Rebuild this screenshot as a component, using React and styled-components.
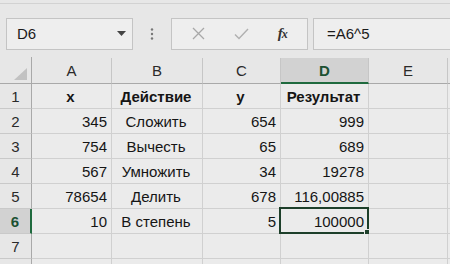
import React from "react";
import styled, { createGlobalStyle } from "styled-components";

const GlobalStyle = createGlobalStyle`
    html, body {
        margin: 0;
        padding: 0;
        background: #e7e7e7;
        font-family: "Liberation Sans", Arial, sans-serif;
        overflow: hidden;
    }
`;

const Page = styled.div`
    width: 450px;
    height: 264px;
    background: #e7e7e7;
    overflow: hidden;
`;

const Toolbar = styled.div`
    height: 54px;
    box-sizing: border-box;
    border-top: 1px solid #d2d2d2;
    margin-top: 3px;
    display: flex;
    align-items: center;
    padding: 0 0 0 6px;
`;

const Box = styled.div`
    height: 32px;
    box-sizing: border-box;
    border: 1px solid #c4c4c4;
    background: #eeeeee;
    display: flex;
    align-items: center;
    margin-top: 6px;
`;

const NameBox = styled(Box)`
    width: 127px;
    padding: 0 6px 0 10px;
    justify-content: space-between;
    font-size: 15px;
    color: #1a1a1a;
`;

const Dots = styled.div`
    width: 38px;
    display: flex;
    justify-content: center;
    margin-top: 6px;
`;

const ButtonsBox = styled(Box)`
    width: 137px;
    justify-content: space-around;
    padding: 0 6px;
`;

const FormulaBox = styled(Box)`
    flex: 1;
    margin-left: 5px;
    border-right: none;
    padding-left: 13px;
    font-size: 15px;
    color: #1a1a1a;
`;

const Fx = styled.span`
    font-family: "Liberation Serif", "Times New Roman", serif;
    font-style: italic;
    font-weight: bold;
    font-size: 15px;
    color: #333;
    letter-spacing: -1px;
    & small {
        font-size: 12px;
    }
`;

const Sheet = styled.div`
    display: grid;
    grid-template-columns: 32px 80px 91px 78px 88px 79px 20px;
    grid-template-rows: 27px;
    grid-auto-rows: 25px;
`;

const Corner = styled.div`
    box-sizing: border-box;
    border-right: 1px solid #a9a9a9;
    border-bottom: 1px solid #a9a9a9;
    display: flex;
    align-items: flex-end;
    justify-content: flex-end;
    padding: 0 4px 3px 0;
`;

const ColHead = styled.div`
    box-sizing: border-box;
    border-right: 1px solid #c6c6c6;
    border-bottom: ${(p) => (p.$active ? "2px solid #1f6a3e" : "1px solid #a9a9a9")};
    background: ${(p) => (p.$active ? "#d2d2d2" : "#e7e7e7")};
    color: ${(p) => (p.$active ? "#1c5132" : "#2a2a2a")};
    font-weight: ${(p) => (p.$active ? "bold" : "normal")};
    font-size: 15px;
    display: flex;
    align-items: center;
    justify-content: center;
    margin-top: 1px;
`;

const RowHead = styled.div`
    box-sizing: border-box;
    border-right: ${(p) => (p.$active ? "2px solid #1f6a3e" : "1px solid #a9a9a9")};
    border-bottom: 1px solid #c9c9c9;
    background: ${(p) => (p.$active ? "#d2d2d2" : "#e7e7e7")};
    color: ${(p) => (p.$active ? "#1c5132" : "#2a2a2a")};
    font-weight: ${(p) => (p.$active ? "bold" : "normal")};
    font-size: 15px;
    display: flex;
    align-items: center;
    justify-content: center;
`;

const Cell = styled.div`
    position: relative;
    box-sizing: border-box;
    border-right: 1px solid #d0d0d0;
    border-bottom: 1px solid #d0d0d0;
    background: #ebebeb;
    font-size: 15px;
    font-weight: ${(p) => (p.$bold ? "bold" : "normal")};
    color: #151515;
    display: flex;
    align-items: center;
    justify-content: ${(p) => (p.$align === "right" ? "flex-end" : "center")};
    padding: 0 4px 0 2px;
    white-space: nowrap;
`;

const Selection = styled.div`
    position: absolute;
    left: -2px;
    top: -2px;
    right: -1px;
    bottom: -1px;
    border: 2px solid #1d3f2a;
    pointer-events: none;
`;

const Handle = styled.div`
    position: absolute;
    right: -4px;
    bottom: -4px;
    width: 5px;
    height: 5px;
    background: #1d3f2a;
    border: 1px solid #ebebeb;
`;

const cols = ["A", "B", "C", "D", "E"];

const rows = [
    [{ v: "x", b: true }, { v: "Действие", b: true }, { v: "y", b: true }, { v: "Результат", b: true }, { v: "" }],
    [{ v: "345", r: true }, { v: "Сложить" }, { v: "654", r: true }, { v: "999", r: true }, { v: "" }],
    [{ v: "754", r: true }, { v: "Вычесть" }, { v: "65", r: true }, { v: "689", r: true }, { v: "" }],
    [{ v: "567", r: true }, { v: "Умножить" }, { v: "34", r: true }, { v: "19278", r: true }, { v: "" }],
    [{ v: "78654", r: true }, { v: "Делить" }, { v: "678", r: true }, { v: "116,00885", r: true }, { v: "" }],
    [{ v: "10", r: true }, { v: "В степень" }, { v: "5", r: true }, { v: "100000", r: true, sel: true }, { v: "" }],
    [{ v: "" }, { v: "" }, { v: "" }, { v: "" }, { v: "" }],
];

const App = () => {
    return (
        <Page>
            <GlobalStyle />
            <Toolbar>
                <NameBox>
                    <span>D6</span>
                    <svg width="9" height="5" viewBox="0 0 9 5">
                        <path d="M0 0 H9 L4.5 5 Z" fill="#444" />
                    </svg>
                </NameBox>
                <Dots>
                    <svg width="4" height="12" viewBox="0 0 4 12">
                        <circle cx="2" cy="1.5" r="1.2" fill="#777" />
                        <circle cx="2" cy="6" r="1.2" fill="#777" />
                        <circle cx="2" cy="10.5" r="1.2" fill="#777" />
                    </svg>
                </Dots>
                <ButtonsBox>
                    <svg width="13" height="13" viewBox="0 0 13 13">
                        <path d="M1 1 L12 12 M12 1 L1 12" stroke="#a8a8a8" strokeWidth="1.3" />
                    </svg>
                    <svg width="15" height="12" viewBox="0 0 15 12">
                        <path d="M1 6.5 L5 10.5 L14 1" stroke="#b0b0b0" strokeWidth="1.4" fill="none" />
                    </svg>
                    <Fx>
                        f<small>x</small>
                    </Fx>
                </ButtonsBox>
                <FormulaBox>=A6^5</FormulaBox>
            </Toolbar>
            <Sheet>
                <Corner>
                    <svg width="13" height="12" viewBox="0 0 13 12">
                        <path d="M13 0 V12 H0 Z" fill="#c2c2c2" />
                    </svg>
                </Corner>
                {cols.map((c) => (
                    <ColHead key={c} $active={c === "D"}>
                        {c}
                    </ColHead>
                ))}
                <ColHead />
                {rows.map((row, i) => (
                    <React.Fragment key={i}>
                        <RowHead $active={i === 5}>{i + 1}</RowHead>
                        {row.map((cell, j) => (
                            <Cell key={j} $bold={cell.b} $align={cell.r ? "right" : "center"}>
                                {cell.v}
                                {cell.sel && (
                                    <Selection>
                                        <Handle />
                                    </Selection>
                                )}
                            </Cell>
                        ))}
                        <Cell />
                    </React.Fragment>
                ))}
                <RowHead />
                {cols.map((c) => (
                    <Cell key={c} />
                ))}
                <Cell />
            </Sheet>
        </Page>
    );
};

export default App;
